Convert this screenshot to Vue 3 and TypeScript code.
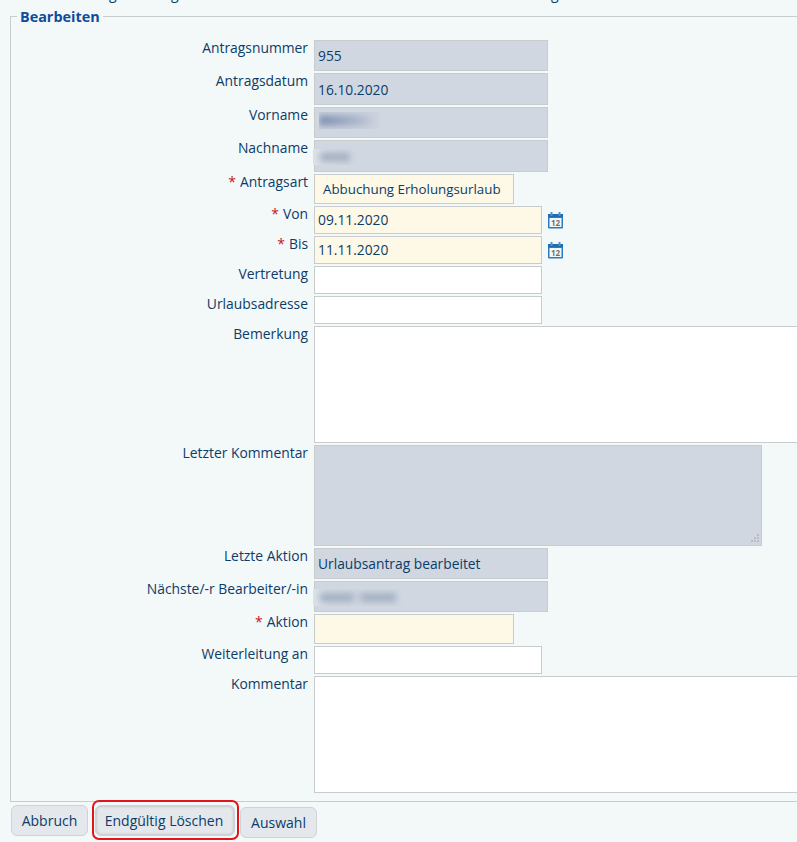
<script setup lang="ts">
interface Row {
  label: string
  req?: boolean
  value?: string
  kind: 'ro' | 'sel' | 'date' | 'text' | 'area' | 'roarea'
  h: number
  blur?: 'vor' | 'nach' | 'next'
}
const rows: Row[] = [
  { label: 'Antragsnummer', value: '955', kind: 'ro', h: 31 },
  { label: 'Antragsdatum', value: '16.10.2020', kind: 'ro', h: 32 },
  { label: 'Vorname', kind: 'ro', h: 31, blur: 'vor' },
  { label: 'Nachname', kind: 'ro', h: 32, blur: 'nach' },
  { label: 'Antragsart', req: true, value: 'Abbuchung Erholungsurlaub', kind: 'sel', h: 30 },
  { label: 'Von', req: true, value: '09.11.2020', kind: 'date', h: 28 },
  { label: 'Bis', req: true, value: '11.11.2020', kind: 'date', h: 28 },
  { label: 'Vertretung', kind: 'text', h: 28 },
  { label: 'Urlaubsadresse', kind: 'text', h: 28 },
  { label: 'Bemerkung', kind: 'area', h: 117 },
  { label: 'Letzter Kommentar', kind: 'roarea', h: 101 },
  { label: 'Letzte Aktion', value: 'Urlaubsantrag bearbeitet', kind: 'ro', h: 31 },
  { label: 'Nächste/-r Bearbeiter/-in', kind: 'ro', h: 31, blur: 'next' },
  { label: 'Aktion', req: true, kind: 'sel', h: 30 },
  { label: 'Weiterleitung an', kind: 'text', h: 28 },
  { label: 'Kommentar', kind: 'area', h: 117 },
]
</script>

<template>
  <div class="page">
    <div class="clip"><span class="clip-text">g</span><span class="clip-text second">g</span><span class="clip-text third">g</span></div>
    <fieldset class="box">
      <legend>Bearbeiten</legend>
      <div class="form">
        <div v-for="r in rows" :key="r.label" class="row">
          <div class="lab"><span v-if="r.req" class="star">*</span>{{ r.label }}</div>
          <div class="field" :class="r.kind" :style="{ height: r.h + 'px' }">
            <span v-if="r.value">{{ r.value }}</span>
            <i v-if="r.blur" class="smear" :class="r.blur"><b></b></i>
            <svg v-if="r.kind === 'roarea'" class="grip" width="10" height="10" viewBox="0 0 10 10">
              <path d="M7 0h2v2H7zM4 3h2v2H4zM7 3h2v2H7zM1 6h2v2H1zM4 6h2v2H4zM7 6h2v2H7z" fill="#b9bcc0" />
            </svg>
          </div>
          <svg v-if="r.kind === 'date'" class="cal" width="18" height="18" viewBox="0 0 18 18">
            <rect x="1" y="3" width="15" height="14.5" rx="1" fill="#2a7cc0" />
            <rect x="1" y="3" width="15" height="3" fill="#1f6db0" />
            <rect x="2.5" y="7" width="12" height="9" fill="#f6f8fa" />
            <rect x="3.5" y="1" width="2" height="4" fill="#4a94d0" />
            <rect x="11.5" y="1" width="2" height="4" fill="#4a94d0" />
            <text x="8.5" y="15" text-anchor="middle" class="cal-num">12</text>
          </svg>
        </div>
      </div>
    </fieldset>
    <div class="btns">
      <button class="btn abbruch">Abbruch</button>
      <span class="del-wrap"><button class="btn del">Endgültig Löschen</button><i class="mark"></i></span>
      <button class="btn auswahl">Auswahl</button>
    </div>
  </div>
</template>

<style>
html, body { margin: 0; background: #f3f8f8; overflow: hidden; }
</style>

<style scoped>
.page {
  width: 797px;
  height: 842px;
  overflow: hidden;
  background: #f3f8f8;
  font-family: "Open Sans", sans-serif;
  font-size: 14px;
  color: #0c3c68;
  position: relative;
}
.clip { height: 3px; overflow: hidden; position: relative; margin-bottom: 4px; }
.clip-text { position: absolute; left: 109px; top: -16px; line-height: 19px; }
.second { left: 171px; }
.third { left: 551px; }
.box {
  margin: 0 0 0 10px;
  padding: 14px 0 8px;
  width: 787px;
  box-sizing: border-box;
  border: 1px solid #c9cccd;
  border-right: 0;
  height: 795px;
  min-width: 0;
}
legend {
  margin-left: 6px;
  padding: 0 3px;
  font-size: 14.4px;
  line-height: 19px;
  font-weight: 700;
  color: #0f4c9c;
}
.form { display: flex; flex-direction: column; gap: 2px; }
.row { display: flex; align-items: flex-start; }
.lab {
  width: 297px;
  flex: none;
  text-align: right;
  font-size: 13.86px;
  line-height: 16px;
  margin-right: 6px;
  white-space: nowrap;
}
.star { color: #c4161c; margin-right: 4px; font-size: 14px; }
.field {
  flex: none;
  box-sizing: border-box;
  border: 1px solid #c9cccd;
  position: relative;
  display: flex;
  align-items: center;
  padding-left: 3px;
  white-space: nowrap;
  font-size: 13.8px;
}
.ro { width: 234px; background: #d0d7e1; }
.roarea { width: 448px; background: #d0d7e1; }
.sel { width: 200px; background: #fef8e6; padding-left: 8px; font-size: 13.33px; }
.date { width: 228px; background: #fef8e6; padding-bottom: 2px; }
.text { width: 228px; background: #fff; }
.area { width: 490px; background: #fff; }
.cal { margin: 5px 0 0 5px; flex: none; }
.cal-num { font: 700 8px "Open Sans", sans-serif; fill: #6d7277; }
.grip { position: absolute; right: 1px; bottom: 1px; }
.smear { position: absolute; display: block; overflow: hidden; }
.smear b { position: absolute; display: block; filter: blur(3px); }
.vor { left: 4px; top: 4px; width: 60px; height: 17px; background: #ccd3de; }
.vor b { left: 0; top: 3px; width: 54px; height: 11px; background: linear-gradient(90deg, #7f90b2, #a9b5c9 70%, #c4ccd9); }
.nach { left: -2px; top: 8px; width: 44px; height: 16px; background: linear-gradient(90deg, #dde2e9, #d0d7e1); }
.nach b { left: 7px; top: 3px; width: 30px; height: 10px; background: #a6b3c4; }
.next { left: -2px; top: 7px; width: 90px; height: 17px; background: linear-gradient(90deg, #dde2e9, #d0d7e1 20%); }
.next b { left: 7px; top: 4px; width: 76px; height: 9px; background: linear-gradient(90deg, #a3b1c2 42%, #c9d0db 46%, #c9d0db 52%, #a3b1c2 56%); }
.btns { display: flex; align-items: flex-start; padding: 3px 0 0 11px; }
.btn {
  font: inherit;
  color: #0c3c68;
  background: #e4e8ec;
  border: 1px solid #cfd3d6;
  border-radius: 6px;
  height: 31px;
  padding: 0;
  line-height: 1;
}
.abbruch { width: 77px; }
.del-wrap { position: relative; display: block; margin-left: 7px; line-height: 0; }
.del { width: 140px; padding-right: 2px; box-shadow: inset 0 0 3px #a9adb1; }
.mark {
  position: absolute;
  left: -3px;
  top: -5px;
  width: 147px;
  height: 40px;
  box-sizing: border-box;
  border: 2px solid #e2151c;
  border-radius: 7px;
}
.auswahl { width: 77px; margin: 2px 0 0 5px; }
</style>
